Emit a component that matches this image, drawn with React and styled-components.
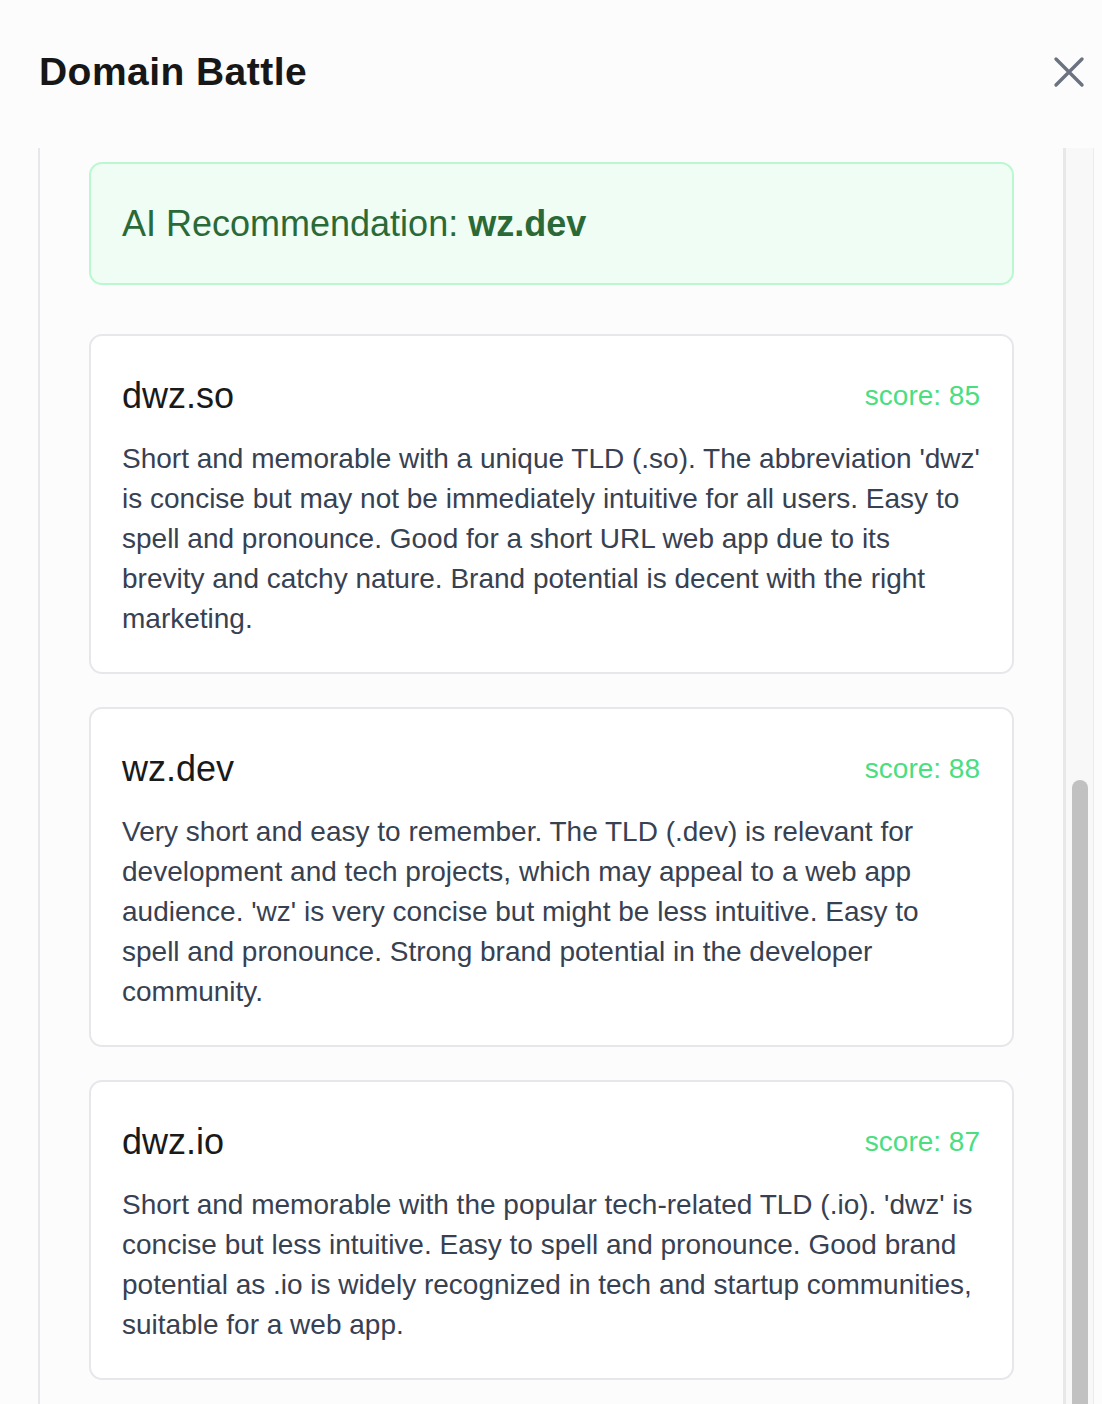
import React from 'react';
import styled, { createGlobalStyle } from 'styled-components';

const GlobalStyle = createGlobalStyle`
  html, body {
    margin: 0;
    padding: 0;
    background: #fcfcfc;
  }
  body {
    font-family: "Liberation Sans", Arial, Helvetica, sans-serif;
  }
`;

const Modal = styled.div`
  width: 1094px;
  height: 1404px;
  display: flex;
  flex-direction: column;
  overflow: hidden;
  background: #fcfcfc;
`;

const Header = styled.header`
  height: 148px;
  display: flex;
  align-items: center;
  justify-content: space-between;
  padding: 0 3px 4px 39px;
  box-sizing: border-box;
`;

const Title = styled.h2`
  margin: 0;
  font-size: 39px;
  font-weight: 700;
  color: #171717;
  letter-spacing: 0.45px;
`;

const CloseButton = styled.button`
  width: 44px;
  height: 44px;
  border: none;
  background: transparent;
  padding: 0;
  display: flex;
  align-items: center;
  justify-content: center;
  cursor: pointer;
`;

const Body = styled.div`
  flex: 1;
  display: flex;
  min-height: 0;
`;

const ScrollArea = styled.div`
  flex: 1;
  border-left: 2px solid #e5e7eb;
  margin-left: 38px;
  padding: 14px 49px 0 49px;
  display: flex;
  flex-direction: column;
  gap: 33px;
  overflow: hidden;
`;

const Track = styled.div`
  width: 27px;
  border-left: 3px solid #e8e8e8;
  border-right: 1px solid #ececec;
  background: #f8f8f8;
  padding-top: 632px;
  display: flex;
  justify-content: center;
`;

const Thumb = styled.div`
  width: 16px;
  height: 700px;
  border-radius: 8px;
  background: #c1c1c1;
  margin-left: 1px;
`;

const Recommendation = styled.div`
  border: 2px solid #bbf7d0;
  background: #f0fdf4;
  border-radius: 13px;
  padding: 33px 31px 32px;
  font-size: 36px;
  line-height: 54px;
  color: #2a6a38;
  margin-bottom: 16px;

  strong {
    font-weight: 700;
  }
`;

const Card = styled.div`
  border: 2px solid #e5e7eb;
  background: #ffffff;
  border-radius: 13px;
  padding: 33px 32px 33px 31px;
`;

const CardHead = styled.div`
  display: flex;
  align-items: center;
  justify-content: space-between;
  margin-bottom: 16px;
`;

const Domain = styled.h3`
  margin: 0;
  font-size: 36px;
  line-height: 54px;
  font-weight: 400;
  color: #1a1a1a;
`;

const Score = styled.span`
  font-size: 28px;
  color: #4ade80;
`;

const Description = styled.p`
  margin: 0;
  font-size: 28px;
  line-height: 40px;
  color: #374151;
`;

const domains = [
  {
    name: 'dwz.so',
    score: 85,
    text: "Short and memorable with a unique TLD (.so). The abbreviation 'dwz' is concise but may not be immediately intuitive for all users. Easy to spell and pronounce. Good for a short URL web app due to its brevity and catchy nature. Brand potential is decent with the right marketing.",
  },
  {
    name: 'wz.dev',
    score: 88,
    text: "Very short and easy to remember. The TLD (.dev) is relevant for development and tech projects, which may appeal to a web app audience. 'wz' is very concise but might be less intuitive. Easy to spell and pronounce. Strong brand potential in the developer community.",
  },
  {
    name: 'dwz.io',
    score: 87,
    text: "Short and memorable with the popular tech-related TLD (.io). 'dwz' is concise but less intuitive. Easy to spell and pronounce. Good brand potential as .io is widely recognized in tech and startup communities, suitable for a web app.",
  },
];

const CloseIcon = () => (
  <svg width="32" height="32" viewBox="0 0 32 32" fill="none">
    <path d="M3 3 L29 29 M29 3 L3 29" stroke="#6b7280" strokeWidth="3.4" strokeLinecap="round" />
  </svg>
);

const App = () => {
  return (
    <>
      <GlobalStyle />
      <Modal>
        <Header>
          <Title>Domain Battle</Title>
          <CloseButton aria-label="Close">
            <CloseIcon />
          </CloseButton>
        </Header>
        <Body>
          <ScrollArea>
            <Recommendation>
              AI Recommendation: <strong>wz.dev</strong>
            </Recommendation>
            {domains.map((d) => (
              <Card key={d.name}>
                <CardHead>
                  <Domain>{d.name}</Domain>
                  <Score>score: {d.score}</Score>
                </CardHead>
                <Description>{d.text}</Description>
              </Card>
            ))}
          </ScrollArea>
          <Track>
            <Thumb />
          </Track>
        </Body>
      </Modal>
    </>
  );
};

export default App;
